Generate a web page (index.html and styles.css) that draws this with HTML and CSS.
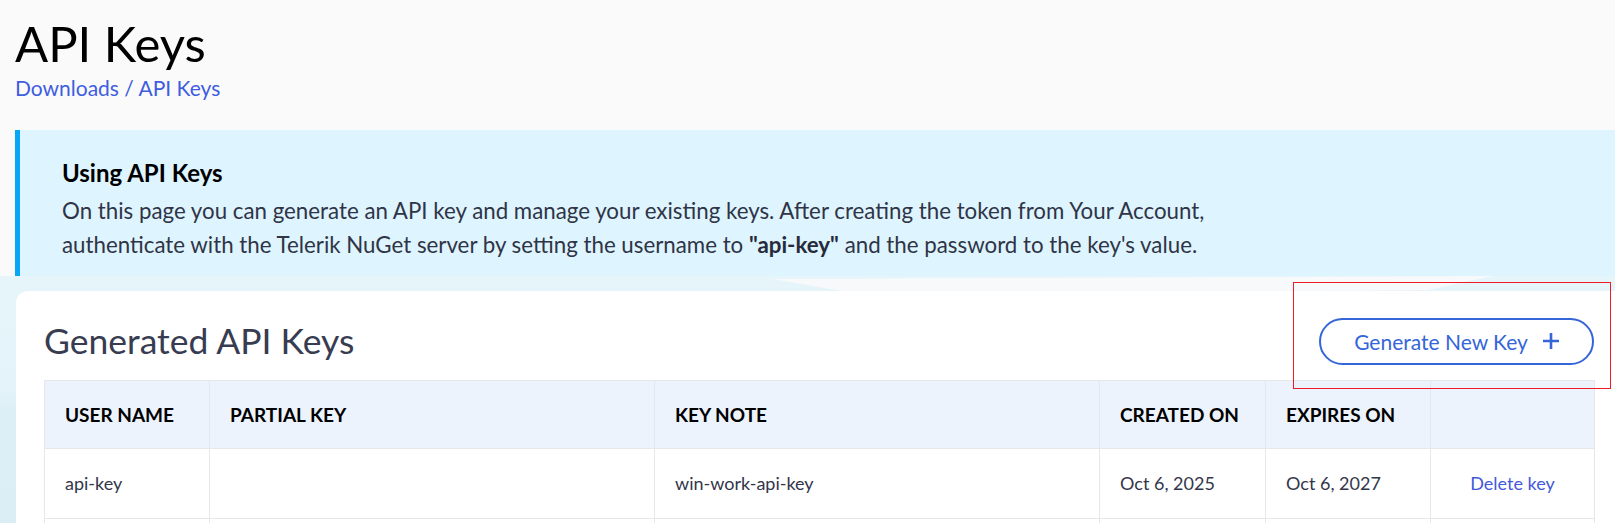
FILE: index.html
```html
<!DOCTYPE html>
<html lang="en">
<head>
<meta charset="utf-8">
<title>API Keys</title>
<link rel="stylesheet" href="styles.css">
</head>
<body>
<div class="page">
  <header class="page-head">
    <h1 class="title">API Keys</h1>
    <nav class="crumbs"><a href="#">Downloads</a> / <a href="#">API Keys</a></nav>
  </header>
  <section class="content">
    <div class="info">
      <h2 class="info-title">Using API Keys</h2>
      <p class="info-text">On this page you can generate an API key and manage your existing keys. After creating the token from Your Account,<br>authenticate with the Telerik NuGet server by setting the username to <b>"api-key"</b> and the password to the key's value.</p>
    </div>
    <div class="card">
      <div class="card-head">
        <h2 class="card-title">Generated API Keys</h2>
        <button class="btn-generate" type="button">Generate New Key
          <svg class="plus" width="18" height="18" viewBox="0 0 18 18" aria-hidden="true"><path d="M9 1v16M1 9h16" stroke="currentColor" stroke-width="2.6" fill="none"/></svg>
        </button>
      </div>
      <table class="keys">
        <colgroup>
          <col class="c1"><col class="c2"><col class="c3"><col class="c4"><col class="c5"><col class="c6">
        </colgroup>
        <thead>
          <tr><th>User Name</th><th>Partial Key</th><th>Key Note</th><th>Created On</th><th>Expires On</th><th></th></tr>
        </thead>
        <tbody>
          <tr><td>api-key</td><td></td><td>win-work-api-key</td><td>Oct 6, 2025</td><td>Oct 6, 2027</td><td class="act"><a href="#">Delete key</a></td></tr>
          <tr><td>&nbsp;</td><td></td><td></td><td></td><td></td><td></td></tr>
        </tbody>
      </table>
    </div>
  </section>
  <div class="annot"></div>
</div>
</body>
</html>
```
FILE: styles.css
```css
* { box-sizing: border-box; }
html, body { margin: 0; padding: 0; }
body {
  background: #fafafa;
  font-family: Lato, "Open Sans", Arial, sans-serif;
  color: #2f3447;
  overflow: hidden;
}
.page { position: relative; }
.page-head { padding: 14px 0 0 15px; }
.title {
  margin: 0;
  font-size: 49px;
  line-height: 1.2;
  font-weight: 400;
  color: #000;
}
.crumbs {
  margin-top: 2px;
  font-size: 21px;
  line-height: 1.2;
  color: #3e5de0;
}
.crumbs a { color: inherit; text-decoration: none; }

.content {
  position: relative;
  margin-top: 30px;
  padding-left: 15px;
  background: linear-gradient(180deg, #fafafa 0, #fafafa 146px, #e6f5fa 146px, #e3f3f9 260px, #ddeff6 280px, #dceef5 100%);
}
.content::before {
  content: "";
  position: absolute;
  left: 0; right: 0;
  top: 146px; height: 20px;
  background: #f8f9fa;
  clip-path: polygon(773px 3px, 1493px 0, 1427px 14px, 865px 19px);
}
.info {
  position: relative;
  background: #def4fe;
  border-left: 5px solid #06a7f4;
  padding: 29px 20px 0 42px;
  height: 146px;
}
.info-title {
  margin: 0;
  font-size: 24px;
  line-height: 1.2;
  font-weight: 700;
  color: #000;
}
.info-text {
  margin: 6px 0 0;
  font-size: 22.3px;
  line-height: 34px;
  color: #2f3447;
}
.info-text b { color: #262a3b; }

.card {
  position: relative;
  margin-top: 15px;
  margin-left: 1px;
  background: #fff;
  border-top-left-radius: 12px;
  padding: 27px 21px 0 28px;
  height: 240px;
}
.card-head {
  display: flex;
  align-items: center;
  justify-content: space-between;
  height: 47px;
}
.card-title {
  margin: 0;
  font-size: 35.5px;
  line-height: 1.2;
  font-weight: 400;
  color: #383c50;
}
.btn-generate {
  display: flex;
  align-items: center;
  gap: 14px;
  height: 47px;
  width: 275px;
  justify-content: center;
  border: 2px solid #3565d8;
  border-radius: 24px;
  background: #fff;
  color: #3565d8;
  font-family: inherit;
  font-size: 21px;
  padding: 0 0 0 1px;
}
.plus { display: block; }

.keys {
  margin-top: 15px;
  width: 1550px;
  border-collapse: collapse;
  table-layout: fixed;
}
.c1 { width: 165px; }
.c2 { width: 445px; }
.c3 { width: 445px; }
.c4 { width: 166px; }
.c5 { width: 165px; }
.c6 { width: 164px; }
.keys th, .keys td {
  border: 1px solid #e5e7eb;
  padding: 0 20px;
  text-align: left;
  vertical-align: middle;
}
.keys th {
  height: 68px;
  background: #edf3fd;
  font-size: 19px;
  font-weight: 700;
  text-transform: uppercase;
  color: #000;
}
.keys td {
  height: 70px;
  font-size: 18px;
  color: #33364a;
}
.keys td.act { text-align: center; padding: 0; }
.keys td.act a { color: #4458d8; text-decoration: none; }

.annot {
  position: absolute;
  left: 1293px;
  top: 282px;
  width: 318px;
  height: 107px;
  border: 1px solid #ed1c24;
  pointer-events: none;
}
```
